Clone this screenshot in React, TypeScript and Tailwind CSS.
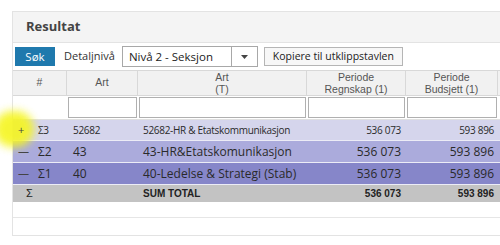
import React from "react";

const cols = "grid grid-cols-[54px_71px_169px_99px_92px_60px]";

interface Row {
  sign: string;
  level: string;
  art: string;
  name: string;
  regnskap: string;
  budsjett: string;
  bg: string;
  h: string;
  text: string;
}

const rows: Row[] = [
  {
    sign: "+",
    level: "Σ3",
    art: "52682",
    name: "52682-HR & Etatskommunikasjon",
    regnskap: "536 073",
    budsjett: "593 896",
    bg: "bg-[#d5d5ec]",
    h: "h-[21px]",
    text: "text-[10px] tracking-[-0.3px]",
  },
  {
    sign: "—",
    level: "Σ2",
    art: "43",
    name: "43-HR&Etatskomunikasjon",
    regnskap: "536 073",
    budsjett: "593 896",
    bg: "bg-[#ababdc]",
    h: "h-[22px]",
    text: "text-[12px]",
  },
  {
    sign: "—",
    level: "Σ1",
    art: "40",
    name: "40-Ledelse & Strategi (Stab)",
    regnskap: "536 073",
    budsjett: "593 896",
    bg: "bg-[#8686c9]",
    h: "h-[22px]",
    text: "text-[12px]",
  },
];

const App = () => {
  return (
    <div className="relative w-[500px] h-[245px] bg-white overflow-hidden font-['Open_Sans',sans-serif] text-[#333]">
      <div className="ml-[12px] mt-[11px] w-[560px] border border-[#e3e3e3]">
        <div className="h-[31px] bg-[#f4f4f4] border-b border-[#e3e3e3] flex items-center pl-[13px]">
          <span className="text-[13px] font-bold text-[#444]">Resultat</span>
        </div>

        <div className="h-[27px] flex items-center pl-[2px]">
          <button className="w-[40px] h-[19px] bg-[#1f79ad] text-white text-[11.5px] leading-none">
            Søk
          </button>
          <span className="ml-[9px] text-[11px] text-[#333]">Detaljnivå</span>
          <div className="ml-[7px] w-[136px] h-[21px] border border-[#a8a8a8] flex items-center bg-white">
            <span className="flex-1 pl-[6px] text-[11.5px] text-[#222]">Nivå 2 - Seksjon</span>
            <div className="w-[26px] h-full border-l border-[#a8a8a8] flex items-center justify-center">
              <svg width="7" height="4" viewBox="0 0 7 4">
                <path d="M0 0h7L3.5 4z" fill="#444" />
              </svg>
            </div>
          </div>
          <button className="ml-[6px] w-[139px] h-[19px] border border-[#b5b5b5] bg-[#f7f7f7] text-[10.5px] text-[#222] leading-none">
            Kopiere til utklippstavlen
          </button>
        </div>

        <div className={`${cols} h-[26px] bg-[#f1f1f1] border-t border-b border-[#d8d8d8] text-[10.5px] text-[#555] font-['Liberation_Sans',sans-serif]`}>
          <div className="flex items-center justify-center border-r border-[#d8d8d8]">#</div>
          <div className="flex items-center justify-center border-r border-[#d8d8d8]">Art</div>
          <div className="flex flex-col items-center justify-center border-r border-[#d8d8d8] leading-[12px]">
            <span>Art</span>
            <span>(T)</span>
          </div>
          <div className="flex flex-col items-center justify-center border-r border-[#d8d8d8] leading-[12px]">
            <span>Periode</span>
            <span>Regnskap (1)</span>
          </div>
          <div className="flex flex-col items-center justify-center border-r border-[#d8d8d8] leading-[12px]">
            <span>Periode</span>
            <span>Budsjett (1)</span>
          </div>
          <div />
        </div>

        <div className={`${cols} h-[24px] bg-white border-b border-[#e0e0e0]`}>
          <div />
          {[0, 1, 2, 3].map((i) => (
            <div key={`filter-${i}`} className="px-[1px] py-[1px]">
              <div className="w-full h-full border border-[#b0b0b0] bg-white" />
            </div>
          ))}
          <div />
        </div>

        {rows.map((r) => (
          <div
            key={r.level}
            className={`${cols} ${r.h} ${r.bg} ${r.text} items-center text-[#2a2a2a] border-b border-[#ececf6]`}
          >
            <div className="flex items-center pl-[5px]">
              <span className="relative z-10 w-[20px] text-[#444] text-[11px]">{r.sign}</span>
              <span>{r.level}</span>
            </div>
            <div className="pl-[6px]">{r.art}</div>
            <div className="pl-[5px] whitespace-nowrap overflow-hidden">{r.name}</div>
            <div className="text-right pr-[5px]">{r.regnskap}</div>
            <div className="text-right pr-[4px]">{r.budsjett}</div>
            <div />
          </div>
        ))}

        <div className={`${cols} h-[17px] bg-[#c3c3c3] items-center text-[10px] font-bold font-['Liberation_Sans',sans-serif] text-[#222]`}>
          <div className="pl-[13px] font-normal text-[11px]">Σ</div>
          <div />
          <div className="pl-[5px]">SUM TOTAL</div>
          <div className="text-right pr-[5px]">536 073</div>
          <div className="text-right pr-[4px]">593 896</div>
          <div />
        </div>

        <div className="h-[16px] border-b border-[#e6e6e6]" />
        <div className="h-[17px]" />
      </div>

      <div className="absolute z-[5] left-[-6px] top-[111px] w-[40px] h-[36px] rounded-full bg-[#f5f520] blur-[4px] opacity-90" />
    </div>
  );
};

export default App;
